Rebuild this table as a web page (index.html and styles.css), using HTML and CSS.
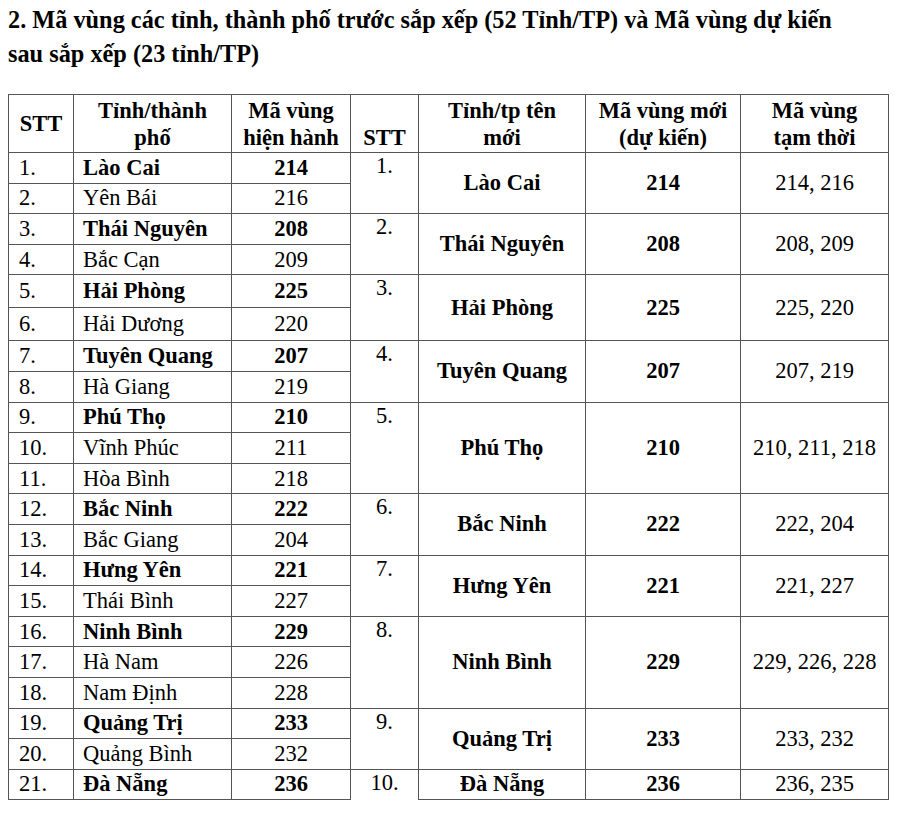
FILE: index.html
```html
<!DOCTYPE html>
<html lang="vi">
<head>
<meta charset="utf-8">
<title>Mã vùng</title>
<link rel="stylesheet" href="styles.css">
</head>
<body>
<h2 class="title">2. Mã vùng các tỉnh, thành phố trước sắp xếp (52 Tỉnh/TP) và Mã vùng dự kiến<br>sau sắp xếp (23 tỉnh/TP)</h2>
<table class="codes">
<colgroup>
<col class="c1"><col class="c2"><col class="c3"><col class="c4"><col class="c5"><col class="c6"><col class="c7">
</colgroup>
<thead>
<tr class="head">
<th class="mid">STT</th>
<th class="mid">Tỉnh/thành<br>phố</th>
<th class="mid">Mã vùng<br>hiện hành</th>
<th class="bot">STT</th>
<th class="mid">Tỉnh/tp tên<br>mới</th>
<th class="mid">Mã vùng mới<br>(dự kiến)</th>
<th class="mid">Mã vùng<br>tạm thời</th>
</tr>
</thead>
<tbody>
<tr><td class="n">1.</td><td class="nm b">Lào Cai</td><td class="cd b">214</td><td class="s2" rowspan="2">1.</td><td class="nn" rowspan="2">Lào Cai</td><td class="nc" rowspan="2">214</td><td class="tc" rowspan="2">214, 216</td></tr>
<tr><td class="n">2.</td><td class="nm">Yên Bái</td><td class="cd">216</td></tr>

<tr><td class="n">3.</td><td class="nm b">Thái Nguyên</td><td class="cd b">208</td><td class="s2" rowspan="2">2.</td><td class="nn" rowspan="2">Thái Nguyên</td><td class="nc" rowspan="2">208</td><td class="tc" rowspan="2">208, 209</td></tr>
<tr><td class="n">4.</td><td class="nm">Bắc Cạn</td><td class="cd">209</td></tr>

<tr class="tall"><td class="n">5.</td><td class="nm b">Hải Phòng</td><td class="cd b">225</td><td class="s2" rowspan="2">3.</td><td class="nn" rowspan="2">Hải Phòng</td><td class="nc" rowspan="2">225</td><td class="tc" rowspan="2">225, 220</td></tr>
<tr class="tall"><td class="n">6.</td><td class="nm">Hải Dương</td><td class="cd">220</td></tr>

<tr><td class="n">7.</td><td class="nm b">Tuyên Quang</td><td class="cd b">207</td><td class="s2" rowspan="2">4.</td><td class="nn" rowspan="2">Tuyên Quang</td><td class="nc" rowspan="2">207</td><td class="tc" rowspan="2">207, 219</td></tr>
<tr><td class="n">8.</td><td class="nm">Hà Giang</td><td class="cd">219</td></tr>

<tr><td class="n">9.</td><td class="nm b">Phú Thọ</td><td class="cd b">210</td><td class="s2" rowspan="3">5.</td><td class="nn" rowspan="3">Phú Thọ</td><td class="nc" rowspan="3">210</td><td class="tc" rowspan="3">210, 211, 218</td></tr>
<tr><td class="n">10.</td><td class="nm">Vĩnh Phúc</td><td class="cd">211</td></tr>
<tr><td class="n">11.</td><td class="nm">Hòa Bình</td><td class="cd">218</td></tr>

<tr><td class="n">12.</td><td class="nm b">Bắc Ninh</td><td class="cd b">222</td><td class="s2" rowspan="2">6.</td><td class="nn" rowspan="2">Bắc Ninh</td><td class="nc" rowspan="2">222</td><td class="tc" rowspan="2">222, 204</td></tr>
<tr><td class="n">13.</td><td class="nm">Bắc Giang</td><td class="cd">204</td></tr>

<tr><td class="n">14.</td><td class="nm b">Hưng Yên</td><td class="cd b">221</td><td class="s2" rowspan="2">7.</td><td class="nn" rowspan="2">Hưng Yên</td><td class="nc" rowspan="2">221</td><td class="tc" rowspan="2">221, 227</td></tr>
<tr><td class="n">15.</td><td class="nm">Thái Bình</td><td class="cd">227</td></tr>

<tr><td class="n">16.</td><td class="nm b">Ninh Bình</td><td class="cd b">229</td><td class="s2" rowspan="3">8.</td><td class="nn" rowspan="3">Ninh Bình</td><td class="nc" rowspan="3">229</td><td class="tc" rowspan="3">229, 226, 228</td></tr>
<tr><td class="n">17.</td><td class="nm">Hà Nam</td><td class="cd">226</td></tr>
<tr><td class="n">18.</td><td class="nm">Nam Định</td><td class="cd">228</td></tr>

<tr><td class="n">19.</td><td class="nm b">Quảng Trị</td><td class="cd b">233</td><td class="s2" rowspan="2">9.</td><td class="nn" rowspan="2">Quảng Trị</td><td class="nc" rowspan="2">233</td><td class="tc" rowspan="2">233, 232</td></tr>
<tr><td class="n">20.</td><td class="nm">Quảng Bình</td><td class="cd">232</td></tr>

<tr><td class="n">21.</td><td class="nm b">Đà Nẵng</td><td class="cd b">236</td><td class="s2 last">10.</td><td class="nn">Đà Nẵng</td><td class="nc">236</td><td class="tc">236, 235</td></tr>
</tbody>
</table>
</body>
</html>
```
FILE: styles.css
```css
html, body {
  background: #ffffff;
}
body {
  margin: 0;
  padding: 3px 8px 0 8px;
  font-family: "Liberation Serif", "Times New Roman", serif;
  color: #000000;
}
.title {
  margin: 0 0 23px 0;
  font-size: 24.3px;
  line-height: 34px;
  font-weight: bold;
}
.codes {
  border-collapse: collapse;
  table-layout: fixed;
  width: 880px;
  font-size: 22.5px;
  line-height: 26px;
}
.c1 { width: 65px; }
.c2 { width: 158px; }
.c3 { width: 119px; }
.c4 { width: 68px; }
.c5 { width: 167px; }
.c6 { width: 155px; }
.c7 { width: 148px; }
.codes th,
.codes td {
  border: 1px solid #555555;
  padding: 0;
}
.head {
  height: 58px;
}
.head th {
  font-weight: bold;
  text-align: center;
  line-height: 27px;
}
.head .mid { vertical-align: middle; }
.head .bot { vertical-align: bottom; padding-bottom: 1px; }
.codes tbody tr {
  height: 30.6px;
}
.codes tbody tr.tall {
  height: 33px;
}
.n {
  padding-left: 10px !important;
  text-align: left;
}
.nm {
  padding-left: 9px !important;
  text-align: left;
  white-space: nowrap;
}
.cd {
  text-align: center;
}
.b {
  font-weight: bold;
}
.s2 {
  text-align: center;
  vertical-align: top;
}
.s2.last {
  border-bottom: none;
}
.nn, .nc {
  text-align: center;
  font-weight: bold;
}
.tc {
  text-align: center;
}
```
